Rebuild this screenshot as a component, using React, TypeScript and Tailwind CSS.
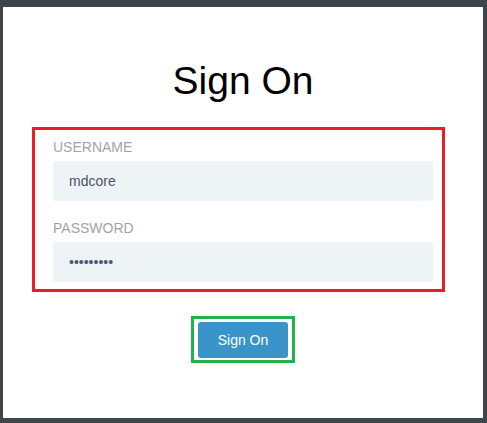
export default function App() {
  return (
    <div className="h-[423px] w-[487px] bg-[#3e454d] pt-[7px] pb-[5px] pl-[3px] pr-[4px] font-['Liberation_Sans',Arial,sans-serif]">
      <div className="flex h-full flex-col bg-white">
        <h1 className="mt-[52px] text-center text-[39px] leading-[44px] text-black">Sign On</h1>

        <div className="ml-[29px] mt-[24px] w-[413px] border-[3px] border-[#ed1c24] pt-[7px] pb-[7px] pl-[18px] pr-[9px]">
          <label className="block text-[14px] leading-[20px] text-[#a0a4a8]">USERNAME</label>
          <input
            readOnly
            defaultValue="mdcore"
            className="mt-[4px] block h-[40px] w-full rounded-[3px] bg-[#eef3f6] px-[16px] text-[14px] text-[#4d5566] outline-none"
          />
          <label className="mt-[17px] block text-[14px] leading-[20px] text-[#a0a4a8]">PASSWORD</label>
          <input
            readOnly
            type="password"
            defaultValue="mdcore123"
            className="mt-[4px] block h-[40px] w-full rounded-[3px] bg-[#eef3f6] px-[16px] text-[14px] text-[#4a5a78] outline-none"
          />
        </div>

        <div className="mt-[24px] flex justify-center">
          <div className="border-[3px] border-[#22b14c] px-[4px] pt-[3px] pb-[2px]">
            <button className="h-[36px] w-[90px] rounded-[3px] bg-[#3a94c9] text-[14px] text-white">Sign On</button>
          </div>
        </div>
      </div>
    </div>
  );
}
